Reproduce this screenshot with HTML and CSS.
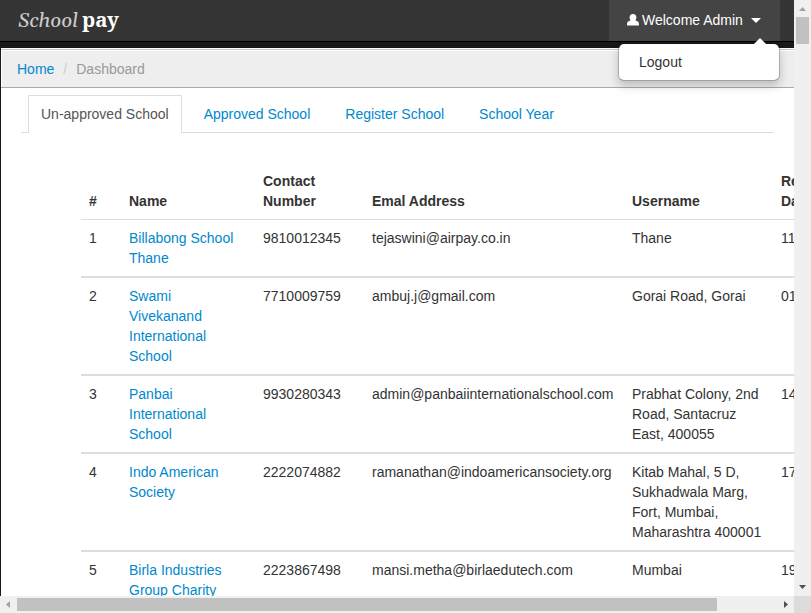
FILE: index.html
```html
<!DOCTYPE html>
<html lang="en">
<head>
<meta charset="utf-8">
<title>School pay</title>
<link rel="stylesheet" href="styles.css">
</head>
<body>
<div class="window">
  <div class="viewport">
    <header class="navbar">
      <div class="brand"><em>School</em> <b>pay</b></div>
      <div class="user">
        <svg class="user-icon" width="12" height="12" viewBox="0 0 12 12"><path fill="#fff" d="M6 0C3.800 0 2.600 1.400 2.600 3.400c0 1.500.600 2.600 1.300 3.200C2.500 7 .5 7.300.2 9L0 11.500h12L11.800 9c-.3-1.700-2.300-2-3.700-2.400.7-.6 1.300-1.700 1.300-3.200C9.400 1.400 8.200 0 6 0z"/></svg>
        <span>Welcome Admin</span>
        <i class="caret"></i>
        <div class="dropdown">Logout</div>
      </div>
    </header>
    <main class="page">
      <nav class="breadcrumb"><a>Home</a><span class="slash">/</span><span>Dashboard</span></nav>
      <nav class="tabs">
        <a class="tab active">Un-approved School</a>
        <a class="tab">Approved School</a>
        <a class="tab">Register School</a>
        <a class="tab">School Year</a>
      </nav>
      <table class="schools">
        <colgroup><col class="c-id"><col class="c-name"><col class="c-phone"><col class="c-mail"><col class="c-user"><col class="c-date"></colgroup>
        <thead>
          <tr><th>#</th><th>Name</th><th>Contact<br>Number</th><th>Emal Address</th><th>Username</th><th>Re<br>Da</th></tr>
        </thead>
        <tbody>
          <tr><td>1</td><td><a>Billabong School<br>Thane</a></td><td>9810012345</td><td>tejaswini@airpay.co.in</td><td>Thane</td><td>11</td></tr>
          <tr><td>2</td><td><a>Swami<br>Vivekanand<br>International<br>School</a></td><td>7710009759</td><td>ambuj.j@gmail.com</td><td>Gorai Road, Gorai</td><td>01</td></tr>
          <tr><td>3</td><td><a>Panbai<br>International<br>School</a></td><td>9930280343</td><td>admin@panbaiinternationalschool.com</td><td>Prabhat Colony, 2nd<br>Road, Santacruz<br>East, 400055</td><td>14</td></tr>
          <tr><td>4</td><td><a>Indo American<br>Society</a></td><td>2222074882</td><td>ramanathan@indoamericansociety.org</td><td>Kitab Mahal, 5 D,<br>Sukhadwala Marg,<br>Fort, Mumbai,<br>Maharashtra 400001</td><td>17</td></tr>
          <tr><td>5</td><td><a>Birla Industries<br>Group Charity</a></td><td>2223867498</td><td>mansi.metha@birlaedutech.com</td><td>Mumbai</td><td>19</td></tr>
        </tbody>
      </table>
    </main>
  </div>
  <div class="vbar">
    <svg width="17" height="17"><path fill="#a3a3a3" d="M5 11h7L8.500 7z"/></svg>
    <div class="vthumb"></div>
    <svg class="end" width="17" height="17"><path fill="#505050" d="M5 6h7L8.500 10z"/></svg>
  </div>
  <div class="hbar">
    <svg width="17" height="17"><path fill="#a3a3a3" d="M10 5v7L6 8.500z"/></svg>
    <div class="hthumb"></div>
    <svg class="end" width="17" height="17"><path fill="#505050" d="M7 5v7l4-3.500z"/></svg>
  </div>
  <div class="corner"></div>
</div>
</body>
</html>
```
FILE: styles.css
```css
* { box-sizing: border-box; }
body {
  margin: 0;
  overflow: hidden;
  font: 14px/20px "Liberation Sans", Arial, sans-serif;
  color: #333;
}
a { color: #0088cc; }
svg { display: block; flex: none; }

.window {
  display: grid;
  grid-template: 596px 17px / 794px 17px;
  width: 811px;
  height: 613px;
}
.viewport {
  overflow: hidden;
  display: flex;
  flex-direction: column;
  background: #1a1919;
}

.navbar {
  flex: none;
  display: flex;
  justify-content: space-between;
  height: 42px;
  padding: 0 14px 0 18px;
  border-bottom: 1px solid #000;
  background:
    repeating-linear-gradient(90deg, rgba(255,255,255,.01) 0 1px, transparent 1px 4px),
    #343434;
}
.brand {
  display: flex;
  align-items: baseline;
  gap: 4px;
  font: 20px/38px Georgia, Gelasio, "Liberation Serif", serif;
  color: #fff;
  white-space: nowrap;
}
.brand em {
  width: 60px;
  color: #ccc;
  font-size: 20.500px;
}
.brand b {
  font-family: "Noto Serif", Georgia, "Liberation Serif", serif;
  font-size: 20.500px;
}
.user {
  position: relative;
  display: flex;
  align-items: center;
  width: 171px;
  padding: 0 0 1px 18px;
  color: #fff;
  background: #444;
}
.user-icon { margin-right: 3px; }
.caret {
  margin-left: 8px;
  border: 5px solid transparent;
  border-top-color: #fff;
  border-bottom: 0;
}
.dropdown {
  position: absolute;
  z-index: 2;
  top: 43px;
  right: 0;
  width: 162px;
  height: 38px;
  padding: 8px 20px;
  color: #333;
  background: #fff;
  background-clip: padding-box;
  border: 1px solid rgba(0,0,0,.2);
  border-bottom-color: #a0a0a0;
  border-radius: 6px;
  box-shadow: 0 5px 10px rgba(0,0,0,.2);
}
.dropdown::before {
  content: "";
  position: absolute;
  top: -6px;
  right: 13px;
  border: 6px solid transparent;
  border-top: 0;
  border-bottom-color: #fff;
}

.page {
  flex: 1;
  min-height: 0;
  margin: 6px 0 0 1px;
  overflow: hidden;
  background: #fff;
}
.breadcrumb {
  display: flex;
  height: 39px;
  margin-top: 1px;
  padding: 9px 16px;
  background: #eee;
  border-top: 1px solid #c8c8c8;
  border-bottom: 1px solid #aaa;
  box-shadow: inset 0 1px #fff, inset 1px 0 #fff;
  color: #999;
}
.slash { margin: 0 9px; color: #ccc; }

.tabs {
  display: flex;
  height: 45px;
  margin: 0 20px;
  padding: 7px 0 0 7px;
  border-bottom: 1px solid #ddd;
  white-space: nowrap;
}
.tab {
  height: 37px;
  margin-right: 9px;
  padding: 8px 12px;
  border: 1px solid transparent;
  border-bottom: 0;
}
.tab.active {
  height: 38px;
  color: #555;
  background: #fff;
  border-color: #ddd;
}

.schools {
  width: 792px;
  margin: 30px 0 0 80px;
  table-layout: fixed;
  border-collapse: separate;
  border-spacing: 0;
}
.c-id { width: 40px; }
.c-name { width: 134px; }
.c-phone { width: 109px; }
.c-mail { width: 260px; }
.c-user { width: 149px; }
.c-date { width: 100px; }
.schools th, .schools td {
  padding: 8px;
  text-align: left;
  white-space: nowrap;
}
.schools th { vertical-align: bottom; border-bottom: 1px solid #ddd; }
.schools td { vertical-align: top; border-bottom: 2px solid #ddd; }

.vbar { display: flex; flex-direction: column; background: #f0f0f0; }
.vthumb { width: 13px; height: 27px; margin-left: 2px; background: #c1c1c1; }
.vbar .end { margin-top: auto; }
.hbar { display: flex; background: #f0f0f0; }
.hthumb { width: 700px; height: 13px; margin-top: 2px; background: #c1c1c1; }
.hbar .end { margin-left: auto; }
.corner { background: #dcdcdc; }
```
